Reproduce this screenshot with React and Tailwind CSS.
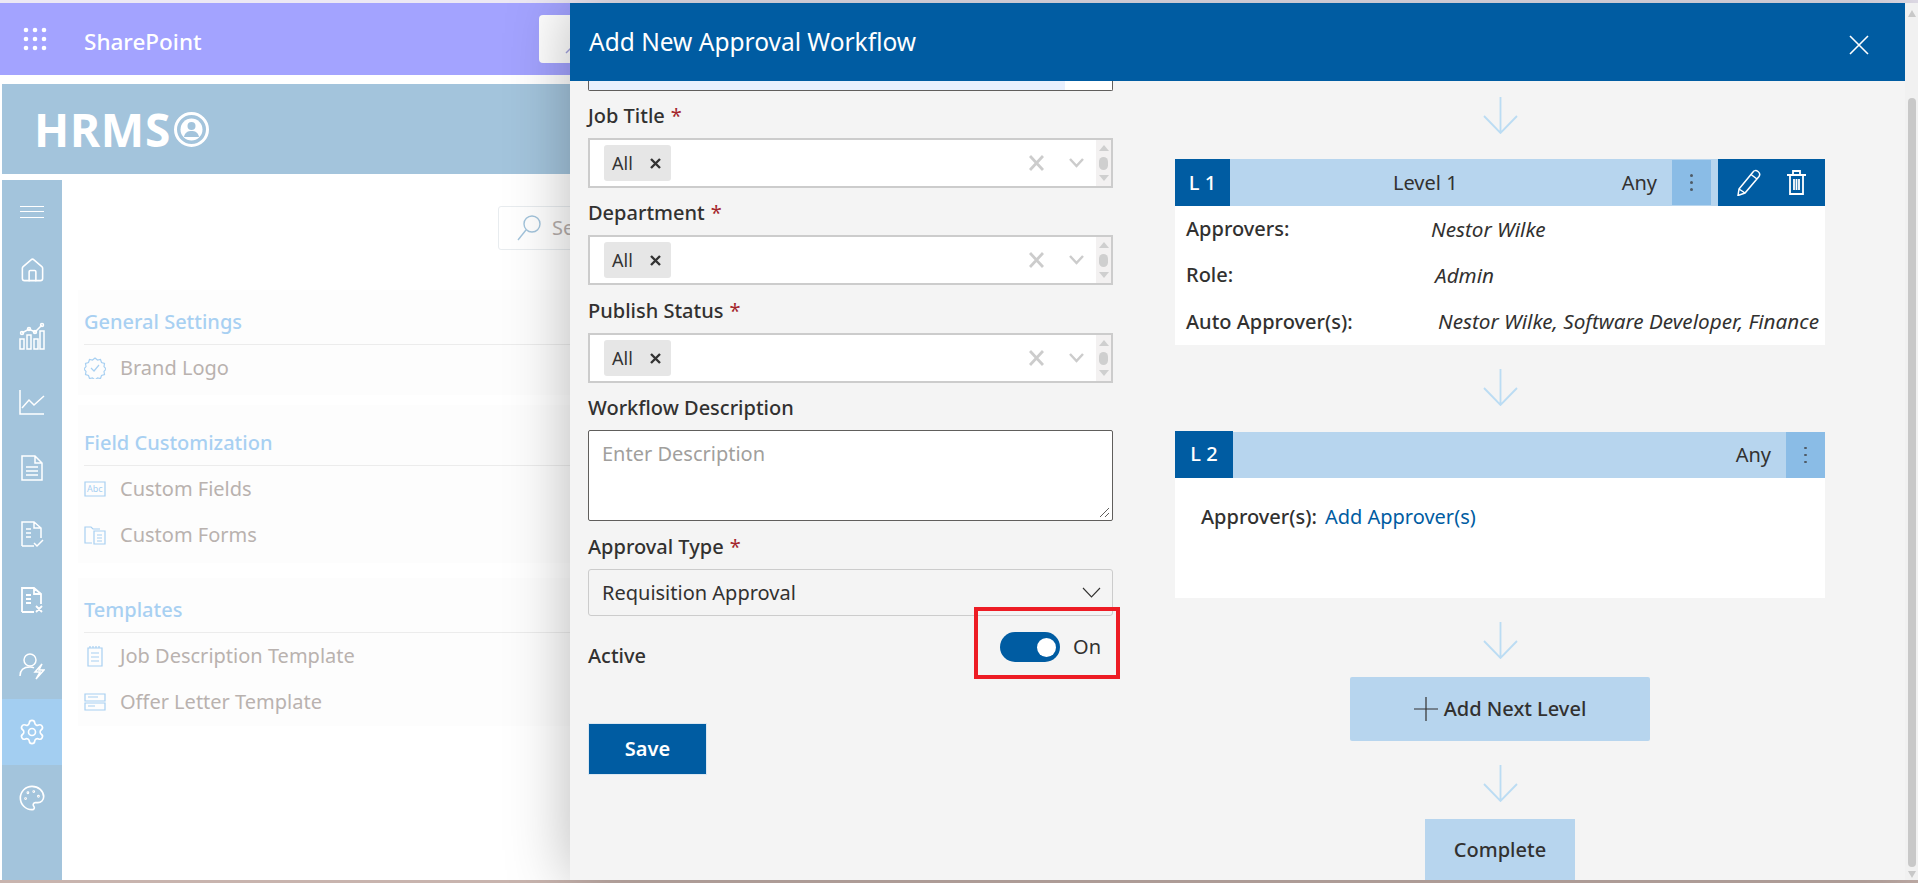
import { Home, Settings, Palette } from 'lucide-react'

const font = { fontFamily: '"Noto Sans", sans-serif' }

const Waffle = () => (
  <svg width="24" height="24" viewBox="0 0 24 24" fill="#fff">
    {[0, 1, 2].map((r) => [0, 1, 2].map((c) => <circle key={`${r}${c}`} cx={3 + c * 9} cy={3 + r * 9} r="2.3" />))}
  </svg>
)

const Side = ({ children }) => (
  <svg width="26" height="28" viewBox="0 0 26 28" fill="none" stroke="#fff" strokeWidth="1.5">{children}</svg>
)

const sideIcons = [
  <Home key="home" size={27} color="#fff" strokeWidth={1.4} />,
  <Side key="bars"><path d="M1 27V17h4v10zM8 27V13h4v14zM15 27V17h4v10zM21 27V9h4v18zM3 11l7-4 6 3 7-7" /><circle cx="3" cy="11" r="1.5" /><circle cx="10" cy="7" r="1.5" /><circle cx="16" cy="10" r="1.5" /><circle cx="23" cy="3" r="1.5" /></Side>,
  <Side key="line"><path d="M1 2v24h24M3 20l7-8 5 5 10-9" /></Side>,
  <Side key="doc"><path d="M3 2h13l7 7v17H3zM16 2v7h7M7 13h12M7 17h12M7 21h12" /></Side>,
  <Side key="check"><path d="M3 26V2h12l7 6v10M15 2v6h7M3 26h12M7 9h5M7 13h5M7 17h5M15 23l3 3 6-6" /></Side>,
  <Side key="cross"><path d="M3 26V2h12l7 6v10M15 2v6h7M3 26h12M7 9h5M7 13h5M7 17h5M17 20l6 6M23 20l-6 6" strokeWidth="1.8" /></Side>,
  <Side key="user"><circle cx="11" cy="8" r="6" /><path d="M1 24c0-6 4-9 10-9 2 0 3 .3 4 .8M23 12l-7 8h5l-4 7 8-9h-5z" /></Side>,
  <Settings key="gear" size={28} color="#fff" strokeWidth={1.4} />,
  <Palette key="palette" size={28} color="#fff" strokeWidth={1.4} />,
]

const RowIcon = ({ children }) => (
  <svg width="22" height="22" viewBox="0 0 22 22" fill="none" stroke="#a8d0f2" strokeWidth="1.2" className="shrink-0">{children}</svg>
)

const Section = ({ title, className, rows }) => (
  <div className={`bg-[#fdfdfd] px-[6px] ${className}`}>
    <div className="border-b-[1px] border-[#ececec] pb-[10px] text-[20px] leading-6 font-medium text-[#a8d0f2]">{title}</div>
    {rows.map(([label, icon]) => (
      <div key={label} className="flex h-[46px] items-center gap-[14px] text-[20px] text-[#b9b2af]">
        {icon}
        <span>{label}</span>
      </div>
    ))}
  </div>
)

const Label = ({ text, required, className = 'h-[47px]' }) => (
  <div className={`flex items-end pb-[10px] text-[20px] leading-6 font-medium text-[#323130] ${className}`}>
    <span>{text}</span>
    {required && <span className="ml-[6px] font-normal text-[#a4262c]">*</span>}
  </div>
)

const MultiSelect = () => (
  <div className="flex h-[50px] items-center border-2 border-[#cccccc] bg-white pl-[14px]">
    <div className="flex h-[36px] w-[67px] items-center justify-between rounded-[3px] bg-[#e6e6e6] pr-[10px] pl-[8px] text-[18px] text-[#333333]">
      <span>All</span>
      <svg width="11" height="11" viewBox="0 0 11 11" stroke="#333" strokeWidth="2.400"><path d="m1 1 9 9M10 1l-9 9" /></svg>
    </div>
    <svg className="ml-auto" width="15" height="16" viewBox="0 0 15 16" stroke="#cccccc" strokeWidth="2.800"><path d="m1 1 13 14M14 1 1 15" /></svg>
    <svg className="ml-[25px]" width="15" height="10" viewBox="0 0 15 10" fill="none" stroke="#cccccc" strokeWidth="2.500"><path d="m1 1 6.500 7L14 1" /></svg>
    <div className="ml-[12px] flex h-full w-[15px] flex-col items-center justify-between bg-[#f3f1f1] py-[5px]">
      <div className="h-0 w-0 border-x-[5px] border-b-[6px] border-x-transparent border-b-[#cfcfcf]" />
      <div className="h-[13px] w-[9px] rounded-full bg-[#cfcfcf]" />
      <div className="h-0 w-0 border-x-[5px] border-t-[6px] border-x-transparent border-t-[#cfcfcf]" />
    </div>
  </div>
)

const DownArrow = () => (
  <svg width="35" height="37" viewBox="0 0 35 37" fill="none" stroke="#bbdcf3" strokeWidth="1.800" className="shrink-0">
    <path d="M17.500 0v36M1 19l16.500 17L34 19" />
  </svg>
)

const Dots = ({ className }) => (
  <div className={`flex flex-col items-center justify-center gap-[4.500px] bg-[#8abce6] ${className}`}>
    <span className="h-[2.500px] w-[3px] rounded-full bg-[#4f5b66]" />
    <span className="h-[2.500px] w-[3px] rounded-full bg-[#4f5b66]" />
    <span className="h-[2.500px] w-[3px] rounded-full bg-[#4f5b66]" />
  </div>
)

const DetailRow = ({ label, value, width }) => (
  <div className="flex h-[46.300px] items-center text-[20px] text-[#323130]">
    <span className={`shrink-0 font-medium ${width}`}>{label}</span>
    <span className="text-[20.700px] whitespace-nowrap italic">{value}</span>
  </div>
)

export default function App() {
  return (
    <div className="relative flex h-[883px] w-[1918px] flex-col overflow-hidden bg-white" style={font}>
      <div className="h-[3px] shrink-0 bg-[#ece8f4]" />
      <div className="flex h-[72px] shrink-0 items-center bg-[#a3a3ff] pl-[23px] text-white">
        <Waffle />
        <span className="mt-[6px] ml-[37px] text-[22.500px] font-medium">SharePoint</span>
        <div className="absolute top-[15px] left-[539px] h-[48px] w-[300px] rounded-[4px] bg-white">
          <svg className="absolute top-[28px] left-[25px]" width="22" height="22" viewBox="0 0 22 22" fill="none" stroke="#a3a3e0" strokeWidth="1.500"><path d="m2 10 6-6" /></svg>
        </div>
      </div>
      <div className="mt-[9px] ml-[2px] flex h-[90px] shrink-0 items-center bg-[#a3c4dc] pl-[32px] text-white">
        <span className="text-[46px] leading-none font-bold tracking-[0.750px]">HRMS</span>
        <svg className="ml-[3px]" width="35" height="35" viewBox="0 0 35 35" fill="none">
          <circle cx="17.500" cy="17.500" r="16" stroke="#fff" strokeWidth="3" />
          <circle cx="17.500" cy="17.500" r="11" fill="#fff" />
          <circle cx="17.500" cy="14" r="4" fill="#a3c4dc" />
          <path d="M10 25c1-5 4-6 7.500-6s6.500 1 7.500 6z" fill="#a3c4dc" />
        </svg>
      </div>
      <div className="mt-[6px] ml-[2px] flex min-h-0 flex-1">
        <div className="w-[60px] shrink-0 bg-[#a3c4dc]">
          <div className="flex h-[57px] flex-col items-center justify-center gap-[4.500px] pt-[6px]">
            <span className="h-[1px] w-[24px] bg-white" />
            <span className="h-[1px] w-[24px] bg-white" />
            <span className="h-[1px] w-[24px] bg-white" />
          </div>
          {sideIcons.map((icon, i) => (
            <div key={i} className={`flex h-[66px] items-center justify-center ${i === 7 ? 'bg-[#a3cef1]' : ''}`}>{icon}</div>
          ))}
        </div>
        <div className="ml-[16px] w-[600px] shrink-0 pt-[26px]">
          <div className="mb-[40px] ml-[420px] flex h-[44px] w-[180px] items-center gap-[11px] rounded-[3px] border border-[#e8ecef] pl-[18px] text-[20px] text-[#b5aeab]">
            <svg width="24" height="26" viewBox="0 0 24 26" fill="none" stroke="#a3c4dc" strokeWidth="1.400"><circle cx="15" cy="9" r="8" /><path d="M9 15 1 25" /></svg>
            <span>Se</span>
          </div>
          <Section
            title="General Settings"
            className="pt-[20px] pb-[4px]"
            rows={[
              ['Brand Logo', <RowIcon key="b"><path d="m11 1 2.500 2 3-.5 1 3 3 1-.5 3 2 2.500-2 2.500.5 3-3 1-1 3-3-.5-2.500 2-2.500-2-3 .5-1-3-3-1 .5-3-2-2.500 2-2.500-.5-3 3-1 1-3 3 .5z" /><path d="m7 11 3 3 5-6" /></RowIcon>],
            ]}
          />
          <Section
            title="Field Customization"
            className="mt-[10px] pt-[26px] pb-[5px]"
            rows={[
              ['Custom Fields', <RowIcon key="f"><path d="M1 4h20v14H1z" /><text x="3" y="14" fontSize="9" fill="#a8d0f2" stroke="none">Abc</text></RowIcon>],
              ['Custom Forms', <RowIcon key="c"><path d="M8 19H1V3h6l2 2h7M10 7h11v13H10zM13 11h5M13 14h5M13 17h5" /></RowIcon>],
            ]}
          />
          <Section
            title="Templates"
            className="mt-[15px] pt-[20px] pb-[1px]"
            rows={[
              ['Job Description Template', <RowIcon key="j"><path d="M4 3h14v18H4zM7 8h8M7 12h8M7 16h8M6 1v2M9 1v2M12 1v2M15 1v2" /></RowIcon>],
              ['Offer Letter Template', <RowIcon key="o"><path d="M1 3h20v7H1zM1 12h20v7H1zM4 6h10M4 15h7" /></RowIcon>],
            ]}
          />
        </div>
      </div>
      <div className="h-[3px] shrink-0 bg-[#c8b4ae]" />

      <div className="absolute top-[3px] right-0 bottom-[3px] left-[570px] flex bg-[#f4f4f4] shadow-[0_0_60px_rgba(0,0,0,0.28)]">
        <div className="flex min-w-0 flex-1 flex-col">
          <div className="flex h-[78px] shrink-0 items-center justify-between bg-[#005ca2] pr-[36px] pl-[19px] text-white">
            <span className="text-[24.500px]">Add New Approval Workflow</span>
            <svg className="mt-[6px]" width="20" height="20" viewBox="0 0 20 20" stroke="#fff" strokeWidth="1.600"><path d="m1 1 18 18M19 1 1 19" /></svg>
          </div>
          <div className="flex min-h-0 flex-1 overflow-hidden">
            <div className="ml-[18px] w-[525px] shrink-0">
              <div className="flex h-[10px] overflow-hidden rounded-b-[2px] border-x border-b border-[#605e5c] bg-white">
                <div className="h-full w-[476px] bg-[#e8f0fe]" />
              </div>
              <Label text="Job Title" required />
              <MultiSelect />
              <Label text="Department" required />
              <MultiSelect />
              <Label text="Publish Status" required className="h-[48px]" />
              <MultiSelect />
              <Label text="Workflow Description" />
              <div className="relative h-[91px] rounded-[2px] border border-[#605e5c] bg-white px-[13px] py-[8px] text-[20px] text-[#a19f9d]">
                Enter Description
                <svg className="absolute right-[2px] bottom-[2px]" width="11" height="11" viewBox="0 0 11 11" stroke="#605e5c"><path d="m1 10 9-9M6 10l4-4" /></svg>
              </div>
              <Label text="Approval Type" required className="h-[48px]" />
              <div className="flex h-[47px] items-center justify-between rounded-[3px] border border-[#cccccc] pr-[11px] pl-[13px] text-[20px] text-[#323130]">
                <span>Requisition Approval</span>
                <svg width="19" height="11" viewBox="0 0 19 11" fill="none" stroke="#323130" strokeWidth="1.100"><path d="m1 1 8.500 9L18 1" /></svg>
              </div>
              <div className="relative flex h-[107px] items-start">
                <span className="mt-[28px] text-[20px] leading-6 font-medium text-[#323130]">Active</span>
                <div className="mt-[16px] ml-auto flex items-center gap-[13px] pr-[12px]">
                  <div className="flex h-[30px] w-[60px] items-center justify-end rounded-full bg-[#005ca2] pr-[4px]">
                    <span className="h-[19px] w-[19px] rounded-full bg-white" />
                  </div>
                  <span className="text-[20px] leading-6 text-[#323130]">On</span>
                </div>
                <div className="absolute top-[-9px] left-[386px] h-[72px] w-[146px] border-4 border-[#ed1c24]" />
              </div>
              <div className="flex h-[52px] w-[119px] items-center justify-center border border-[#dbe7f1] bg-[#005ca2] text-[20px] font-semibold text-white">Save</div>
            </div>
            <div className="ml-[62px] flex w-[650px] shrink-0 flex-col items-center pt-[16px]">
              <DownArrow />
              <div className="mt-[25px] w-full bg-white">
                <div className="flex h-[47px] items-stretch bg-[#b7d5ee] text-[20px] text-[#323130]">
                  <div className="flex w-[55px] items-center justify-center bg-[#005ca2] font-medium text-white">L 1</div>
                  <span className="ml-[163px] self-center">Level 1</span>
                  <span className="ml-auto self-center">Any</span>
                  <Dots className="my-[1px] ml-[15px] w-[39px]" />
                  <div className="ml-[7px] flex w-[107px] items-center gap-[26px] bg-[#005ca2] pl-[19px]">
                    <svg width="24" height="27" viewBox="0 0 24 27" fill="none" stroke="#fff" strokeWidth="1.500"><path d="m2 20 14-17c1-1.500 3-2 5-.5s2 3.500 1 5L8 24l-7 2.500zM2 20l6 4M14 5.500l6 4.500" /></svg>
                    <svg width="19" height="25" viewBox="0 0 19 25" fill="none" stroke="#fff" strokeWidth="1.800"><path d="M0 5h19M6 5V1h7v4M3 5v19h13V5M7 9v11M9.500 9v11M12 9v11" /></svg>
                  </div>
                </div>
                <div className="pl-[11px]">
                  <DetailRow label="Approvers:" value="Nestor Wilke" width="w-[245px]" />
                  <DetailRow label="Role:" value="Admin" width="w-[249px]" />
                  <DetailRow label="Auto Approver(s):" value="Nestor Wilke, Software Developer, Finance" width="w-[252px]" />
                </div>
              </div>
              <div className="mt-[24px]"><DownArrow /></div>
              <div className="mt-[26px] w-full">
                <div className="flex h-[46px] items-stretch text-[20px] text-[#323130]">
                  <div className="-mt-[1px] flex w-[58px] items-center justify-center bg-[#005ca2] font-medium text-white">L 2</div>
                  <div className="flex flex-1 items-center justify-end bg-[#b7d5ee] pr-[15px]">Any</div>
                  <Dots className="w-[39px]" />
                </div>
                <div className="flex h-[120px] items-start gap-[8px] bg-white pt-[24px] pl-[26px] text-[20px]">
                  <span className="font-medium text-[#323130]">Approver(s):</span>
                  <span className="text-[#005ca2]">Add Approver(s)</span>
                </div>
              </div>
              <div className="mt-[24px]"><DownArrow /></div>
              <div className="mt-[18px] flex h-[64px] w-[300px] shrink-0 items-center justify-center gap-[6px] rounded-[2px] bg-[#b7d5ee] text-[20px] font-medium text-[#323130]">
                <svg width="24" height="24" viewBox="0 0 24 24" stroke="#323130" strokeWidth="1.200"><path d="M12 0v24M0 12h24" /></svg>
                <span>Add Next Level</span>
              </div>
              <div className="mt-[24px]"><DownArrow /></div>
              <div className="mt-[17px] flex h-[61px] w-[150px] shrink-0 items-center justify-center bg-[#b7d5ee] pt-[2px] text-[20px] font-medium text-[#323130]">Complete</div>
            </div>
          </div>
        </div>
        <div className="flex w-[13px] shrink-0 flex-col items-center justify-between bg-[#f1f1f1] pt-[7px] pb-[2px]">
          <div className="h-0 w-0 border-x-[4px] border-b-[7px] border-x-transparent border-b-[#c8c8c8]" />
          <div className="mt-[81px] mb-[4px] w-[8px] flex-1 rounded-full bg-[#c8c8c8]" />
          <div className="h-0 w-0 border-x-[4px] border-t-[7px] border-x-transparent border-t-[#c8c8c8]" />
        </div>
      </div>
    </div>
  )
}
